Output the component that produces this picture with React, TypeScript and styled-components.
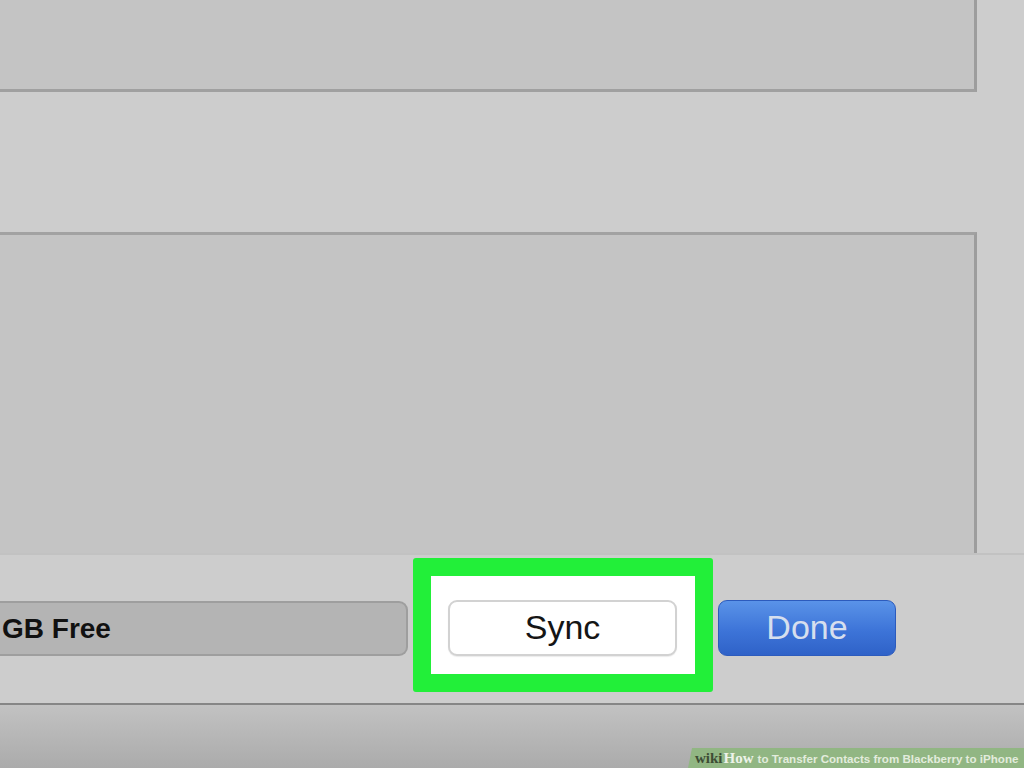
import React from "react";
import styled, { createGlobalStyle } from "styled-components";

const Global = createGlobalStyle`
  html, body { margin: 0; padding: 0; background: #cdcdcd; }
  * { box-sizing: border-box; }
`;

const Screen = styled.div`
  position: relative;
  width: 1024px;
  height: 768px;
  overflow: hidden;
  background: #cdcdcd;
  display: flex;
  flex-direction: column;
  font-family: "Liberation Sans", Arial, sans-serif;
`;

const Panel = styled.div<{ $h: number; $top?: boolean; $mt?: number }>`
  width: 977px;
  height: ${(p) => p.$h}px;
  margin-top: ${(p) => p.$mt ?? 0}px;
  background: #c4c4c4;
  border-right: 3px solid #9d9d9d;
  border-bottom: ${(p) => (p.$top ? "3px solid #a0a0a0" : "none")};
  border-top: ${(p) => (p.$top ? "none" : "3px solid #a2a2a2")};
  flex: none;
`;

const Controls = styled.div`
  height: 150px;
  flex: none;
  border-top: 2px solid #c2c2c2;
  display: flex;
  align-items: flex-start;
`;

const StorageBar = styled.div`
  width: 408px;
  height: 55px;
  margin-top: 46px;
  background: #b4b4b4;
  border: 2px solid #9e9e9e;
  border-left: none;
  border-radius: 0 9px 9px 0;
  display: flex;
  align-items: center;
  padding-left: 2px;
  font-size: 28px;
  font-weight: 700;
  color: #111;
`;

const Highlight = styled.div`
  width: 300px;
  height: 134px;
  margin-top: 3px;
  margin-left: 5px;
  border: 18px solid #22ef39;
  border-radius: 3px;
  background: #ffffff;
  padding: 24px 0 0 17px;
`;

const SyncButton = styled.div`
  width: 229px;
  height: 56px;
  background: #ffffff;
  border: 2px solid #d2d2d2;
  border-radius: 9px;
  box-shadow: 0 1px 1px rgba(0, 0, 0, 0.08);
  display: flex;
  align-items: center;
  justify-content: center;
  font-size: 34px;
  color: #151515;
  padding-bottom: 2px;
`;

const DoneButton = styled.div`
  width: 178px;
  height: 56px;
  margin-top: 45px;
  margin-left: 5px;
  border-radius: 9px;
  border: 1px solid #2c5bbd;
  background: linear-gradient(#5a93e8, #3d74d8 55%, #2f62c8);
  display: flex;
  align-items: center;
  justify-content: center;
  font-size: 34px;
  color: #d6dfee;
  padding-bottom: 2px;
`;

const Toolbar = styled.div`
  flex: 1;
  border-top: 2px solid #868686;
  background: linear-gradient(#c2c2c2, #b4b4b4 60%, #ababab);
`;

const Watermark = styled.div`
  position: absolute;
  right: 0;
  bottom: 0;
  width: 336px;
  height: 20px;
  background: #91b683;
  clip-path: polygon(4px 0, 100% 0, 100% 100%, 0 100%);
  display: flex;
  align-items: center;
  padding-left: 7px;
  white-space: nowrap;
`;

const WikiPart = styled.span<{ $light?: boolean }>`
  font-family: "Liberation Serif", "Times New Roman", serif;
  font-weight: 700;
  font-size: 15px;
  color: ${(p) => (p.$light ? "#eef3ea" : "#3e4d35")};
  margin-right: ${(p) => (p.$light ? "4px" : "1px")};
`;

const WatermarkTitle = styled.span`
  font-family: "Liberation Sans", Arial, sans-serif;
  font-weight: 700;
  font-size: 11.6px;
  color: #e3ecdd;
`;

export default function App() {
  return (
    <>
      <Global />
      <Screen>
        <Panel $h={92} $top />
        <Panel $h={321} $mt={140} />
        <Controls>
          <StorageBar>GB Free</StorageBar>
          <Highlight>
            <SyncButton>Sync</SyncButton>
          </Highlight>
          <DoneButton>Done</DoneButton>
        </Controls>
        <Toolbar />
        <Watermark>
          <WikiPart>wiki</WikiPart>
          <WikiPart $light>How</WikiPart>
          <WatermarkTitle>to Transfer Contacts from Blackberry to iPhone</WatermarkTitle>
        </Watermark>
      </Screen>
    </>
  );
}
